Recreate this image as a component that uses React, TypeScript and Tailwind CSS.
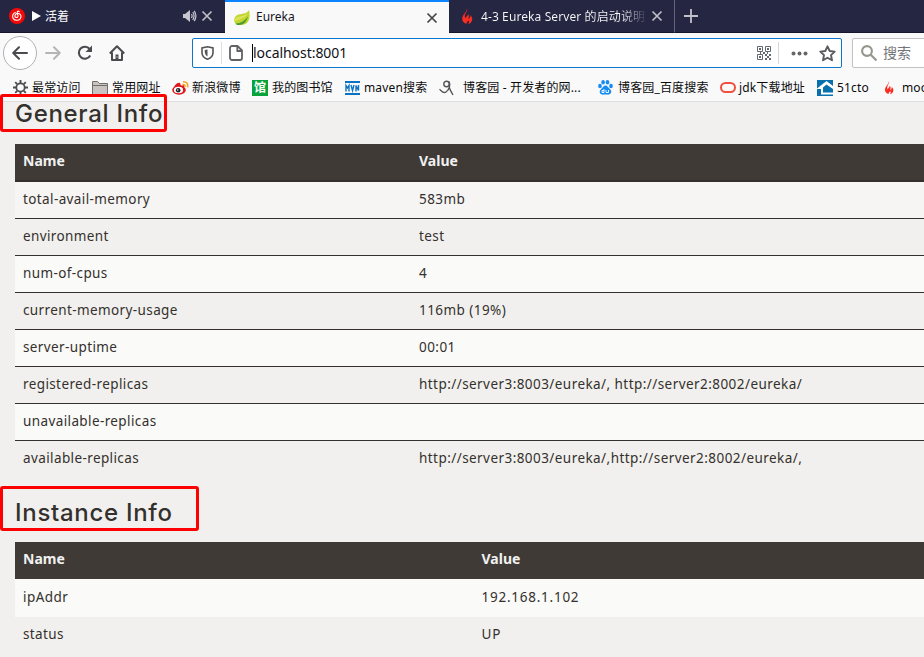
import type { ReactNode } from "react";

const ui = "font-['Noto_Sans','Noto_Sans_CJK_SC',sans-serif]";

function Close({ className }: { className: string }) {
  return (
    <svg className={className} width="12" height="12" viewBox="0 0 12 12" fill="none" stroke="currentColor" strokeWidth="1.7">
      <path d="M1.500 1.500l9 9M10.500 1.500l-9 9" />
    </svg>
  );
}

function Flame({ className }: { className: string }) {
  return (
    <svg className={className} viewBox="0 0 12 16" fill="#fb2c20">
      <path d="M6 0C6.900 3 4.300 5 3.900 7.500c-.2 1.200.2 2 .6 2.700C5.200 8.600 6.700 7.800 7 6c1.300 1.700 1 3.500.4 5C9 10 9.600 8.600 9.300 7c2.200 2.200 2.600 4.700 1.200 6.700-.7 1.100-1.900 2-3.400 2.300 1.200-1.200 1.300-2.500.5-3.500-.8.800-2.200 1.600-2.100 3.300C3 15.200 1.300 13.500 1.200 11 1.200 8.900 2 7.500 3.200 6 4.700 4 5.900 2.500 6 0z" />
    </svg>
  );
}

function TabBar() {
  return (
    <div className="flex h-[33px] w-full bg-[#252642] text-[12px] text-[#f9f9fa]">
      <div className="flex w-[225px] shrink-0 items-center pl-[9px] border-b border-[#15162b]">
        <svg width="16" height="16" viewBox="0 0 16 16" fill="none">
          <circle cx="8" cy="8" r="8" fill="#f50808" />
          <path d="M6.300 4.600C3.500 5.600 3 8.600 4.300 10.600c1.500 2.200 5.200 2.300 6.900.2 1.500-2 .8-4.500-1.300-5.300C7.600 4.800 5.600 6.500 5.900 8.300c.3 1.500 2.700 1.700 3.100.1.200-.8-.8-3.300-.8-4.200 0-1 1-1.400 2-.7" stroke="#fff" strokeWidth="1.1" strokeLinecap="round" />
        </svg>
        <svg className="ml-[7px]" width="9" height="10" viewBox="0 0 9 10" fill="#fff"><path d="M0 0l9 5-9 5z" /></svg>
        <span className="ml-1 w-[138px] pt-[2px] leading-4">活着</span>
        <svg width="14" height="12" viewBox="0 0 14 12" fill="none" stroke="#c7c6ce" strokeWidth="1.200">
          <path d="M0 4h2l5-4v12L2 8H0z" fill="#c7c6ce" stroke="none" />
          <path d="M8.500 4q1.200 2 0 4M9.800 2q2.500 4 0 8M11.200.8q3.400 5.200 0 10.400" />
        </svg>
        <Close className="ml-[4px] text-[#bfbec7]" />
      </div>
      <div className="flex w-[224px] shrink-0 items-center border-t-2 border-[#0a84ff] bg-[#f9f9fa] pl-[9px] text-[#15151a]">
        <svg width="16" height="16" viewBox="0 0 16 16">
          <path d="M15 0c1.300 5.600.8 12-3.500 14C8 15.600 3 15.500 1 13 -.6 10.500.1 6.700 3.300 5 6.500 3.400 12.500 4.500 15 0z" fill="#c2d62e" />
          <path d="M1.500 13.400C6 13.600 10.500 11.300 14 6.500 12.500 13 8 15.700 3 15z" fill="#4b9e30" />
          <path d="M1 9c3-3 8-2.200 13-5.500C11.500 8.200 6 9 1 11z" fill="#dce45d" />
        </svg>
        <span className="ml-[6px] w-[170px] pb-px leading-4">Eureka</span>
        <Close className="text-[#45454a]" />
      </div>
      <div className="flex w-[226px] shrink-0 items-center border-b border-r border-b-[#15162b] border-r-[#62627a] pl-[12px]">
        <Flame className="h-[16px] w-[12px]" />
        <span className="ml-[8px] w-[165px] overflow-hidden whitespace-nowrap bg-linear-to-r from-[#f9f9fa] from-85% to-[#353550] bg-clip-text pt-[2px] leading-5 tracking-[0.1px] text-transparent">4-3 Eureka Server 的启动说明</span>
        <Close className="ml-[5px] text-[#bfbec7]" />
      </div>
      <div className="flex flex-1 items-center border-b border-[#15162b] pl-[9px]">
        <svg width="14" height="14" viewBox="0 0 14 14" stroke="#c2c1ca" strokeWidth="1.800"><path d="M7 0v14M0 7h14" /></svg>
      </div>
    </div>
  );
}

function QrCode() {
  return (
    <svg className="shrink-0" width="14" height="14" viewBox="0 0 14 14" fill="none" stroke="#62696e" strokeWidth="1">
      <path d="M.5.500h5v5h-5zM8.500.500h5v5h-5zM.5 8.500h5v5h-5z" />
      <path d="M2 2h2v2H2zM10 2h2v2h-2zM2 10h2v2H2zM6 6h2v2H6zM8 8h2v2H8zM12 8h2v2h-2zM10 10h2v2h-2zM8 12h2v2H8zM12 12h2v2h-2zM3 6h1v2H3zM10 6h1v2h-1z" fill="#62696e" stroke="none" />
    </svg>
  );
}

function Toolbar() {
  return (
    <div className="flex h-[40px] w-full items-center overflow-hidden pl-[3px]">
      <div className="flex size-[34px] shrink-0 items-center justify-center rounded-full border border-[#b1b1b3] bg-white">
        <svg width="16" height="14" viewBox="0 0 16 14" fill="none" stroke="#4a4a4f" strokeWidth="2" strokeLinecap="round" strokeLinejoin="round"><path d="M15 7H1.500M7 1.200L1.200 7 7 12.800" /></svg>
      </div>
      <svg className="ml-[8px] shrink-0" width="16" height="14" viewBox="0 0 16 14" fill="none" stroke="#b5b5b5" strokeWidth="2" strokeLinecap="round" strokeLinejoin="round"><path d="M1 7h13.500M9 1.200L14.800 7 9 12.800" /></svg>
      <svg className="ml-[16px] shrink-0" width="16" height="16" viewBox="0 0 16 16" fill="none" stroke="#4a4a4f" strokeWidth="2.100"><path d="M12.600 4A6 6 0 1 0 13.200 10.500" /><path d="M15 .5V7H8.500z" fill="#4a4a4f" stroke="none" /></svg>
      <svg className="ml-[16px] shrink-0" width="16" height="16" viewBox="0 0 16 16" fill="none" stroke="#4a4a4f" strokeWidth="2" strokeLinejoin="round"><path d="M.8 8.500L8 1.200l7.200 7.300M3 7.500V15h10V7.500" /><path d="M8 15V9.500" strokeWidth="3" /><path d="M7.500 12h1" stroke="#f9f9fa" strokeWidth="1" /></svg>
      <div className="ml-[67px] flex h-[30px] w-[650px] shrink-0 items-center rounded-[2px] border border-[#0a78d0] bg-white pl-[8px]">
        <svg width="13" height="14" viewBox="0 0 13 14" fill="none" stroke="#55555a" strokeWidth="1.600"><path d="M6.500.8L12 2v4.500c0 3-2.500 5.700-5.500 6.700C3.500 12.200 1 9.500 1 6.500V2z" /><path d="M6.500 3.500v7C4.600 9.200 3.700 8 3.700 4z" fill="#55555a" stroke="none" /></svg>
        <div className="ml-[7px] h-[22px] w-px bg-[#dedee0]" />
        <svg className="ml-[7px]" width="14" height="16" viewBox="0 0 14 16" fill="none" stroke="#626266" strokeWidth="1.800" strokeLinejoin="round"><path d="M3 1h5.500L13 5.500V13a2 2 0 0 1-2 2H3a2 2 0 0 1-2-2V3a2 2 0 0 1 2-2z" /><path d="M8.300 1v5H13" /></svg>
        <div className="ml-[9px] h-[18px] w-px bg-black" />
        <span className="w-[504px] shrink-0 text-[14px] leading-[20px] tracking-[-0.05px] text-[#111118]">localhost:8001</span>
        <QrCode />
        <div className="ml-[7px] h-[22px] w-px shrink-0 bg-[#d7d7db]" />
        <svg className="ml-[12px] shrink-0" width="17" height="5" viewBox="0 0 17 5" fill="#66666a"><circle cx="2.500" cy="2.500" r="2" /><circle cx="8.500" cy="2.500" r="2" /><circle cx="14.500" cy="2.500" r="2" /></svg>
        <svg className="ml-[11px] shrink-0" width="17" height="17" viewBox="0 0 17 17" fill="none" stroke="#5b5b5f" strokeWidth="1.900" strokeLinejoin="round"><path d="M8.500 1.300l2.200 4.700 5 .6-3.700 3.500 1 5.200-4.500-2.600L4 15.300l1-5.200-3.700-3.500 5-.6z" /></svg>
      </div>
      <div className="ml-[10px] flex h-[30px] w-[200px] shrink-0 items-center rounded-[2px] border border-[#c4c2c0] bg-white pl-[8px] text-[14px] text-[#74747a]">
        <svg width="16" height="16" viewBox="0 0 16 16" fill="none" stroke="#97958f" strokeWidth="2.100"><circle cx="6" cy="6" r="4.900" /><path d="M9.500 9.500L15.500 15.500" /></svg>
        <span className="ml-[6px] leading-5">搜索</span>
      </div>
    </div>
  );
}

const bookmarks: { box: string; gap: string; label: string; icon: ReactNode }[] = [
  { box: "w-[79px]", gap: "w-[19px]", label: "最常访问", icon: <svg width="15" height="15" viewBox="0 0 15 15" fill="none" stroke="#4d4d50"><circle cx="7.500" cy="7.500" r="4.200" strokeWidth="1.800" /><path d="M7.500 0v3M7.500 12v3M0 7.500h3M12 7.500h3M2.200 2.200l2 2M10.800 10.800l2 2M2.200 12.800l2-2M10.800 4.200l2-2" strokeWidth="1.900" /></svg> },
  { box: "w-[80px]", gap: "w-[20px]", label: "常用网址", icon: <svg width="16" height="14" viewBox="0 0 16 14" fill="#c9c4c2" stroke="#706d6a"><path d="M.5.500h5l2 2h8v11H.5z" /><path d="M1 4.500h14" /></svg> },
  { box: "w-[80px]", gap: "w-[20px]", label: "新浪微博", icon: <svg width="17" height="14" viewBox="0 0 17 14" fill="none"><ellipse cx="7" cy="9" rx="6.800" ry="4.700" fill="#e4161c" /><path d="M2 6q3-5 6-4l1 3 3-1v3" fill="#e4161c" /><ellipse cx="6.500" cy="9" rx="4.600" ry="3.200" fill="#fff" /><circle cx="6.200" cy="9.200" r="2.300" fill="#222" /><circle cx="5.800" cy="9" r=".7" fill="#fff" /><path d="M10.500 3.500q3-.5 2.500 2.700M11 .8q5.300-.3 4.700 5.500" stroke="#f6a11b" strokeWidth="1.500" /></svg> },
  { box: "w-[92px]", gap: "w-[20px]", label: "我的图书馆", icon: <span className="flex size-4 items-center justify-center bg-[#07a33a] text-[12px] font-bold leading-4 text-white">馆</span> },
  { box: "w-[95px]", gap: "w-[20px]", label: "maven搜索", icon: <svg className="ml-px" width="15" height="14" viewBox="0 0 15 14" fill="none" stroke="#0b72c4"><path d="M0 1h15M0 13h15" strokeWidth="2" /><path d="M1 10.500V4.500l1.500 2.500L4 4.500v6M6 4l1.500 5.500L9 4M11 10.500v-6l2.500 5v-5.500" strokeWidth="1.400" /></svg> },
  { box: "w-[158px]", gap: "w-[24px]", label: "博客园 - 开发者的网...", icon: <svg width="15" height="16" viewBox="0 0 15 16" fill="none" stroke="#555" strokeWidth="1.400"><circle cx="7.500" cy="4" r="2.700" /><path d="M10 1.500C12 5 10 10 7 12c-3 2-4.200-1-6.500-2.800M10 7c1 3 2.500 5.500 4 8" /></svg> },
  { box: "w-[122px]", gap: "w-[21px]", label: "博客园_百度搜索", icon: <svg className="ml-px" width="15" height="15" viewBox="0 0 15 15" fill="#168cf2"><ellipse cx="2" cy="6" rx="1.800" ry="2.200" /><ellipse cx="5.100" cy="2.300" rx="1.800" ry="2.300" /><ellipse cx="9.500" cy="2.300" rx="1.800" ry="2.300" /><ellipse cx="13" cy="6" rx="1.800" ry="2.200" /><path d="M7.500 5.500c2 0 2.500 2 4.300 3.500 3 2.500 1 6-2.500 5.600-1.200-.2-2.400-.2-3.600 0C2 15 .2 11.500 3.200 9 5 7.500 5.500 5.500 7.500 5.500z" /><path d="M6 9v3.500H4v-2h2M8 10v2.500h2.500V10" fill="none" stroke="#fff" strokeWidth=".9" /></svg> },
  { box: "w-[98px]", gap: "w-[20px]", label: "jdk下载地址", icon: <svg className="ml-px" width="16" height="11" viewBox="0 0 16 11" fill="none" stroke="#f0503f" strokeWidth="2"><rect x="1" y="1" width="14" height="9" rx="4.500" /></svg> },
  { box: "w-[65px]", gap: "w-[20px]", label: "51cto", icon: <svg width="16" height="16" viewBox="0 0 16 16"><path d="M0 0h16v16H0z" fill="#0870ac" /><path d="M0 8.500L9.500 1 16 6v3l-6.500-4.500L6 7.500v5h10v2H4V9H0z" fill="#fff" /></svg> },
  { box: "w-[60px]", gap: "w-[20px]", label: "mooc", icon: <Flame className="ml-[2px] h-[15px] w-[10px]" /> },
];

function BookmarkBar() {
  return (
    <div className="flex h-[29px] w-full overflow-hidden border-b border-[#dedede] pl-[13px] text-[12px] text-[#0c0c0d]">
      {bookmarks.map((b) => (
        <div key={b.label} className={`flex h-[29px] shrink-0 items-center whitespace-nowrap ${b.box}`}>
          <span className={`flex shrink-0 ${b.gap}`}>{b.icon}</span>
          <span className="pt-px leading-4 tracking-[0.15px]">{b.label}</span>
        </div>
      ))}
    </div>
  );
}

const general: [string, string, string][] = [
  ["total-avail-memory", "583mb", "bg-[#f6f5f4]"],
  ["environment", "test", "bg-[#f1f0ee]"],
  ["num-of-cpus", "4", "bg-[#fafaf8]"],
  ["current-memory-usage", "116mb (19%)", "bg-[#f1f0ee]"],
  ["server-uptime", "00:01", "bg-[#fafaf8]"],
  ["registered-replicas", "http://server3:8003/eureka/, http://server2:8002/eureka/", "bg-[#f1f0ee]"],
  ["unavailable-replicas", "", "bg-[#fafaf8]"],
  ["available-replicas", "http://server3:8003/eureka/,http://server2:8002/eureka/,", "bg-[#f1f0ee]"],
];

export default function App() {
  return (
    <div className={`relative h-[657px] w-[924px] overflow-hidden bg-[#f1f0ee] ${ui}`}>
      <div className="bg-[#f9f9fa]">
        <TabBar />
        <Toolbar />
        <BookmarkBar />
      </div>
      <main className="pl-[15px] text-[13.5px] text-[#34302d]">
        <h1 className="flex h-[42px] items-start font-['Inter',sans-serif] text-[24px] font-medium leading-[24px] tracking-[0.7px]">General Info</h1>
        <div className="flex h-[38px] border-b-2 border-[#34302d] bg-[#403a36] pl-[8px] text-[14px] font-bold leading-[34px] text-[#f1f1f1]">
          <span className="w-[396px]">Name</span><span>Value</span>
        </div>
        {general.map(([name, value, bg], i) => (
          <div key={name} className={`flex h-[37px] pl-[8px] leading-[34px] ${bg} ${i < 7 ? "border-b border-[#34302d]" : ""}`}>
            <span className="w-[396px] tracking-[0.39px]">{name}</span><span className="tracking-[0.44px]">{value}</span>
          </div>
        ))}
        <h1 className="mt-[20px] flex h-[44px] items-start font-['Inter',sans-serif] text-[24px] font-medium leading-[29px] tracking-[0.7px]">Instance Info</h1>
        <div className="flex h-[37px] bg-[#403a36] pl-[8px] text-[14px] font-bold leading-[34px] text-[#f1f1f1]">
          <span className="w-[458.500px]">Name</span><span>Value</span>
        </div>
        <div className="flex h-[38px] bg-[#fafaf8] pl-[8px] leading-[36px]"><span className="w-[458.500px] tracking-[0.45px]">ipAddr</span><span className="tracking-[0.75px]">192.168.1.102</span></div>
        <div className="flex h-[40px] pl-[8px] leading-[34px]"><span className="w-[458.500px] tracking-[0.39px]">status</span><span className="tracking-[1px]">UP</span></div>
      </main>
      <div className="absolute left-0 top-[94px] h-[38px] w-[167px] rounded-[3px] border-3 border-[#fe0000]" />
      <div className="absolute left-0 top-[486px] h-[45px] w-[199px] rounded-[3px] border-3 border-[#fe0000]" />
    </div>
  );
}
